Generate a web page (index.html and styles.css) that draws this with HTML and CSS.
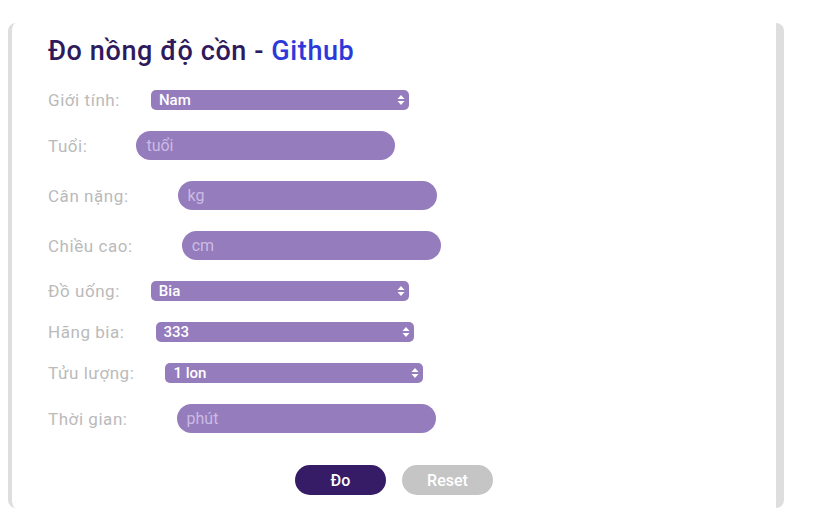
FILE: index.html
```html
<!DOCTYPE html>
<html lang="vi">
<head>
    <meta charset="UTF-8">
    <meta name="viewport" content="width=device-width, initial-scale=1.0">
    <title>Đo nồng độ cồn</title>
    <link rel="stylesheet" href="styles.css">
</head>
<body>
    <div class="card">
        <h1 class="title">Đo nồng độ cồn - <a href="#">Github</a></h1>
        <form class="form" onsubmit="return false">
            <div class="row">
                <label for="gender">Giới tính:</label>
                <select id="gender" class="pick">
                    <option>Nam</option>
                    <option>Nữ</option>
                </select>
            </div>
            <div class="row">
                <label for="age">Tuổi:</label>
                <input type="text" id="age" class="field" placeholder="tuổi">
            </div>
            <div class="row">
                <label for="weight">Cân nặng:</label>
                <input type="text" id="weight" class="field" placeholder="kg">
            </div>
            <div class="row">
                <label for="height">Chiều cao:</label>
                <input type="text" id="height" class="field" placeholder="cm">
            </div>
            <div class="row">
                <label for="drink">Đồ uống:</label>
                <select id="drink" class="pick">
                    <option>Bia</option>
                    <option>Rượu</option>
                </select>
            </div>
            <div class="row">
                <label for="brand">Hãng bia:</label>
                <select id="brand" class="pick">
                    <option>333</option>
                    <option>Heineken</option>
                    <option>Tiger</option>
                </select>
            </div>
            <div class="row">
                <label for="amount">Tửu lượng:</label>
                <select id="amount" class="pick">
                    <option>1 lon</option>
                    <option>2 lon</option>
                    <option>3 lon</option>
                </select>
            </div>
            <div class="row">
                <label for="time">Thời gian:</label>
                <input type="text" id="time" class="field" placeholder="phút">
            </div>
            <div class="buttons">
                <button type="submit" class="btn btn-go">Đo</button>
                <button type="reset" class="btn btn-reset">Reset</button>
            </div>
        </form>
    </div>
</body>
</html>
```
FILE: styles.css
```css
body { margin: 0; background: #fff; font-family: Roboto, "Liberation Sans", sans-serif; }
.card { margin: 23px 29px 0 8px; height: 485px; box-sizing: border-box; padding-top: 13px; border-left: 4px solid #dedede; border-right: 8px solid #dedede; border-radius: 8px; }
.title { margin: 0 0 24px; padding-left: 36px; font-size: 27px; font-weight: 500; line-height: 30px; letter-spacing: 0.6px; color: #2e1a5c; }
.title a { color: #2d3ad9; text-decoration: none; }
.form { display: flex; flex-direction: column; gap: 21px; }
.row { display: flex; align-items: center; padding-left: 36px; }
.row label { font-size: 17px; letter-spacing: 0.55px; color: #bababa; }
.pick { -webkit-appearance: none; appearance: none; margin-left: 31px; width: 258px; height: 20px; padding: 0 0 0 8px; border: none; border-radius: 5px; background: #957cbd url("data:image/svg+xml;utf8,<svg xmlns='http://www.w3.org/2000/svg' width='8' height='12'><path d='M4 1L7.5 5H0.5Z M4 11L7.5 7H0.5Z' fill='white'/></svg>") no-repeat right 4px center; color: #fff; font-family: inherit; font-size: 15px; font-weight: 500; outline: none; }
.field { margin-left: 49px; width: 259px; height: 29px; box-sizing: border-box; padding: 0 10px; border: none; border-radius: 15px; background: #957cbd; color: #fff; font-family: inherit; font-size: 16px; outline: none; }
.field::placeholder { color: #cbbbe4; }
.buttons { display: flex; justify-content: center; gap: 16px; margin-top: 11px; }
.btn { width: 91px; height: 30px; border: none; border-radius: 15px; color: #fff; font-family: inherit; font-size: 16px; font-weight: 500; cursor: pointer; }
.btn-go { background: #361b66; }
.btn-reset { background: #c5c5c5; }
```
